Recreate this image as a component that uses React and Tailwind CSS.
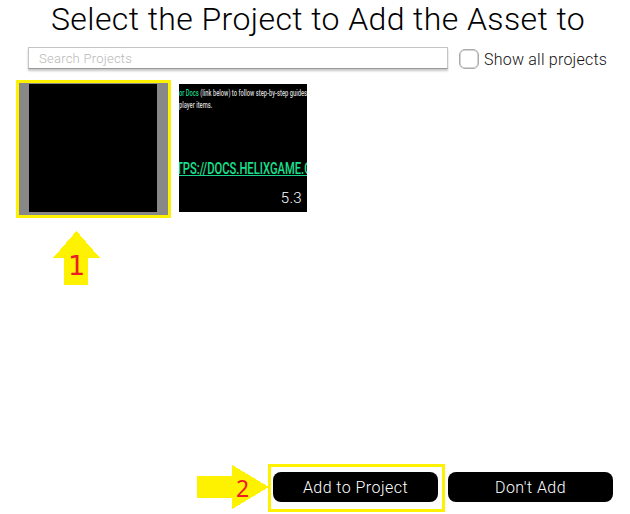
function ProjectTile({ children, className = "" }) {
  return (
    <div className={`relative h-32 w-32 shrink-0 overflow-hidden bg-black ${className}`}>
      {children}
    </div>
  );
}

function ActionButton({ children }) {
  return (
    <button className="flex h-[30px] w-[165px] items-center justify-center rounded-lg bg-black pt-px text-[16px] leading-[30px] font-light tracking-[0.45px] text-white">
      {children}
    </button>
  );
}

export default function App() {
  return (
    <main className="relative flex h-[514px] w-[630px] flex-col overflow-hidden bg-white font-['Roboto','Liberation_Sans',sans-serif] font-light whitespace-nowrap text-black">
      <h1 className="h-[47px] pl-[51px] text-[32px] leading-[38px] tracking-[0.4px]">
        Select the Project to Add the Asset to
      </h1>

      <div className="flex h-[23px] items-start pl-7">
        <input
          placeholder="Search Projects"
          className="h-[22px] w-[420px] border border-[#c4c4c4] border-b-[#999] bg-white pl-2.5 text-[13px] tracking-[0.25px] shadow-[0_2px_2px_rgba(0,0,0,0.22)] outline-none placeholder:text-[#b8b8b8]"
        />
        <label className="mt-0.5 ml-[11px] flex items-start gap-[5px] text-[16px] leading-5 tracking-[0.22px] text-[#111]">
          <span className="h-5 w-5 rounded-md border-[1.5px] border-[#aaa] bg-white shadow-[inset_0_0_0_0.5px_#aaa]" />
          <span className="pt-px">Show all projects</span>
        </label>
      </div>

      <section className="mt-[13px] flex items-start gap-[11px] pl-[19px]">
        <div className="flex h-[132px] w-[149px] bg-[#888] pt-px pl-2.5">
          <ProjectTile />
        </div>
        <ProjectTile className="mt-px bg-[#020706] font-medium">
          <p className="h-3 w-[210px] origin-left scale-x-[0.61] pt-1 text-[9.5px] leading-[10px] text-[#d5d5d5]">
            <span className="text-[#18d68a]">or Docs</span> (link below) to follow step-by-step guides
          </p>
          <p className="h-3 w-[210px] origin-left scale-x-[0.61] pt-1 text-[9.5px] leading-[10px] text-[#d5d5d5]">player items.</p>
          <div className="mt-[51px] -ml-[3px] h-[17px] w-[190px] origin-left scale-x-[0.7] border-b border-[#18d68a] pt-px text-[16px] leading-[18px] text-[#18e18f]">
            TPS://DOCS.HELIXGAME.C
          </div>
          <span className="absolute right-[5px] bottom-1 text-[15px] leading-5 font-light tracking-[0.3px] text-white">5.3</span>
        </ProjectTile>
      </section>

      <footer className="mt-auto mb-3 flex gap-2.5 pl-[273px]">
        <ActionButton>Add to Project</ActionButton>
        <ActionButton>Don't Add</ActionButton>
      </footer>

      <div className="pointer-events-none absolute top-20 left-4 h-[138px] w-[155px] border-[3px] border-[#fff200]" />
      <div className="pointer-events-none absolute top-[464px] left-[268px] h-12 w-[177px] border-[3px] border-[#fff200]" />
      <div className="pointer-events-none absolute top-[231px] left-[53px] h-[54px] w-[47px]">
        <svg viewBox="0 0 47 54" className="h-full w-full" shapeRendering="crispEdges">
          <path d="M23.5 0 47 27H35V54H11V27H0Z" fill="#fff200" />
        </svg>
        <span className="absolute top-[20px] left-[15px] font-['DejaVu_Sans',sans-serif] text-[27px] leading-[30px] font-normal text-[#ed1c24]">1</span>
      </div>
      <div className="pointer-events-none absolute top-[465px] left-[197px] h-11 w-[72px]">
        <svg viewBox="0 0 72 44" className="h-full w-full" shapeRendering="crispEdges">
          <path d="M0 11H35V0L72 22 35 44V33H0Z" fill="#fff200" />
        </svg>
        <span className="absolute top-[8px] left-[39px] font-['Noto_Sans',sans-serif] text-[23px] leading-[30px] font-normal text-[#ed1c24]">2</span>
      </div>
    </main>
  );
}
